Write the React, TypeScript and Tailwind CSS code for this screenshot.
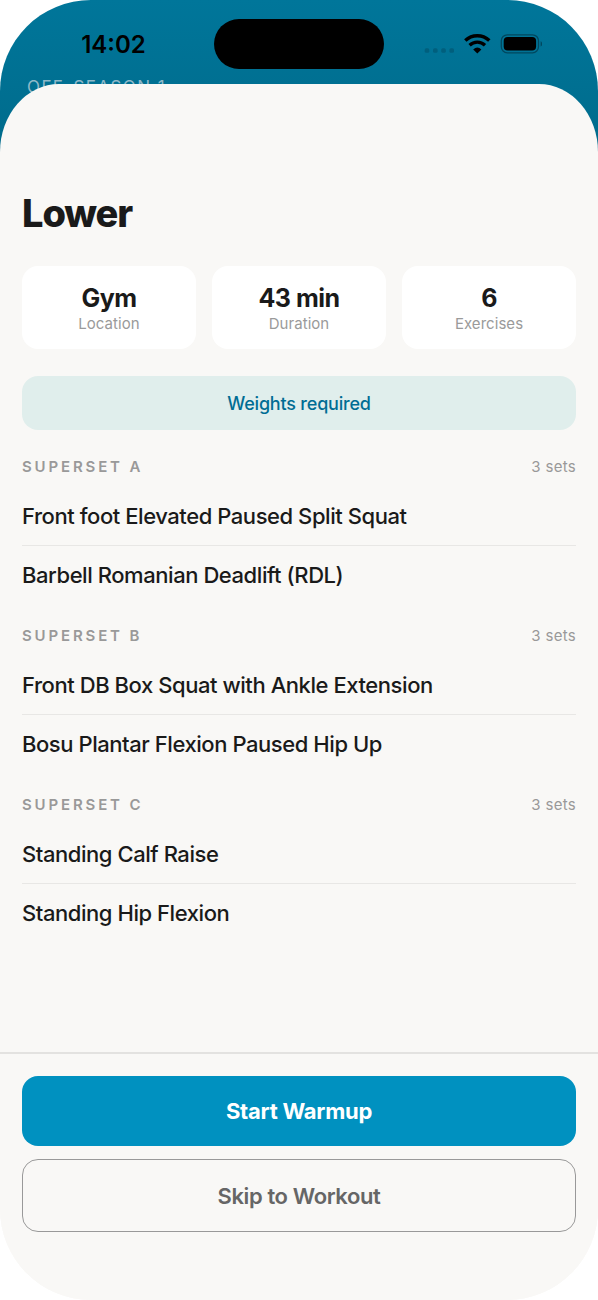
import React from "react";

type Superset = {
  label: string;
  sets: number;
  exercises: string[];
};

const stats = [
  { value: "Gym", label: "Location" },
  { value: "43 min", label: "Duration" },
  { value: "6", label: "Exercises" },
];

const supersets: Superset[] = [
  {
    label: "SUPERSET A",
    sets: 3,
    exercises: ["Front foot Elevated Paused Split Squat", "Barbell Romanian Deadlift (RDL)"],
  },
  {
    label: "SUPERSET B",
    sets: 3,
    exercises: ["Front DB Box Squat with Ankle Extension", "Bosu Plantar Flexion Paused Hip Up"],
  },
  {
    label: "SUPERSET C",
    sets: 3,
    exercises: ["Standing Calf Raise", "Standing Hip Flexion"],
  },
];

const StatusIcons = () => (
  <svg width="120" height="24" viewBox="0 0 120 24" fill="none">
    {/* No signal */}
    <g fill="#005f7d">
      <rect x="2.7" y="16.2" width="4.6" height="4.6" rx="1.5" />
      <rect x="11" y="16.2" width="4.6" height="4.6" rx="1.5" />
      <rect x="19.2" y="16.2" width="4.6" height="4.6" rx="1.5" />
      <rect x="27.4" y="16.2" width="4.6" height="4.6" rx="1.5" />
    </g>
    {/* Wifi */}
    <path d="M43.3 8.6A17.5 17.5 0 0 1 67.3 8.6" stroke="#000" strokeWidth="3.5" />
    <path d="M47.6 13.2A11.2 11.2 0 0 1 63 13.2" stroke="#000" strokeWidth="3.3" />
    <path d="M51.2 17.4Q55.3 13.8 59.4 17.4L55.3 21.6Z" fill="#000" />
    {/* Battery */}
    <rect x="79.3" y="2.8" width="37.2" height="18" rx="6" stroke="#00485f" strokeWidth="1.3" />
    <rect x="81.7" y="5" width="32.4" height="13.6" rx="4" fill="#000" />
    <path d="M118.6 9.2Q120.2 9.9 120.2 11.9T118.6 14.6Z" fill="#00485f" />
  </svg>
);

const App = () => {
  return (
    <div className="h-[1300px] w-[598px] bg-white font-['Inter',sans-serif] text-[#1a1a1a]">
      <div className="relative flex h-full flex-col overflow-hidden rounded-[91px] bg-[#f9f8f6]">
        {/* Dimmed screen behind the sheet */}
        <div className="absolute inset-x-0 top-0 h-[170px] bg-linear-to-b from-[#00769a] to-[#006a8a]">
          <p className="absolute top-[77px] left-[27px] text-[17px] leading-5 tracking-[1.4px] text-[#8fb9c9]">
            OFF-SEASON 1
          </p>
        </div>

        {/* Status bar */}
        <div className="relative flex h-[84px] shrink-0 pt-[19px]">
          <div className="flex w-[214px] justify-center pl-[13px] text-2xl leading-[52px] font-semibold text-black">
            14:02
          </div>
          <div className="h-[50px] w-[170px] rounded-full bg-black" />
          <div className="pt-[13px] pl-[38px]">
            <StatusIcons />
          </div>
        </div>

        {/* Sheet */}
        <div className="relative flex flex-1 flex-col rounded-t-[59px_68px] bg-[#f9f8f6]">
          <div className="flex-1 px-[22px] pt-[105px]">
            <h1 className="text-[38px] leading-[49px] font-extrabold tracking-[-1.1px]">Lower</h1>

            <div className="mt-7 grid grid-cols-3 gap-4">
              {stats.map((stat) => (
                <div key={stat.label} className="flex h-[83px] flex-col items-center rounded-2xl bg-white pt-[17px]">
                  <span className="text-[25px] leading-[30px] font-bold tracking-[-0.5px]">{stat.value}</span>
                  <span className="text-[15px] leading-[22px] tracking-[0.05px] text-[#9a9a9a]">{stat.label}</span>
                </div>
              ))}
            </div>

            <div className="mt-[27px] flex h-[54px] items-center justify-center rounded-2xl bg-[#e0eeec] pt-0.5 text-lg font-medium tracking-[-0.2px] text-[#006d94]">
              Weights required
            </div>

            <div className="mt-[25px]">
              {supersets.map((superset) => (
                <div key={superset.label} className="h-[169px]">
                  <div className="flex h-6 items-center justify-between text-[15px] text-[#999]">
                    <span className="font-semibold tracking-[2.85px]">{superset.label}</span>
                    <span className="tracking-[0.3px]">{superset.sets} sets</span>
                  </div>
                  <div className="mt-[7px] divide-y divide-[#e8e7e5]">
                    {superset.exercises.map((exercise) => (
                      <div
                        key={exercise}
                        className="flex h-[59.5px] items-center pt-0.5 text-[22px] font-medium tracking-[-0.44px] last:pt-px"
                      >
                        {exercise}
                      </div>
                    ))}
                  </div>
                </div>
              ))}
            </div>
          </div>

          {/* Footer actions */}
          <div className="flex h-[248px] flex-col gap-[13px] border-t-2 border-[#e3e2e0] px-[22px] pt-[22px]">
            <button className="h-[70px] shrink-0 rounded-2xl bg-[#0091c0] text-[22px] font-bold tracking-[-0.25px] text-white">
              Start Warmup
            </button>
            <button className="h-[73px] shrink-0 rounded-2xl border-[1.5px] border-[#999] pt-0.5 text-[22px] font-semibold tracking-[-0.4px] text-[#666]">
              Skip to Workout
            </button>
          </div>
        </div>
      </div>
    </div>
  );
};

export default App;
